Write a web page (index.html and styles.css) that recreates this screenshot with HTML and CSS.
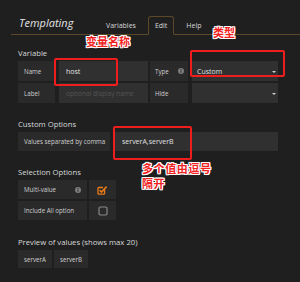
FILE: index.html
```html
<!DOCTYPE html>
<html lang="zh">
<head>
<meta charset="utf-8">
<title>Templating</title>
<link rel="stylesheet" href="styles.css">
</head>
<body>
<div class="page">
  <header class="head">
    <h2 class="title">Templating</h2>
    <nav class="tabs">
      <span class="tab">Variables</span>
      <span class="tab active">Edit</span>
      <span class="tab">Help</span>
    </nav>
  </header>

  <main class="content">
    <h5 class="sec sec-var">Variable</h5>
    <div class="row row-var">
      <span class="lbl w-name">Name</span>
      <span class="inp w-input">host</span>
      <span class="lbl w-type">Type
        <svg class="info" viewBox="0 0 6 6" width="6" height="6"><circle cx="3" cy="3" r="3" fill="#7d7d7d"/><rect x="2.55" y="2.5" width="0.9" height="2.3" fill="#2a2a2a"/><circle cx="3" cy="1.5" r="0.55" fill="#2a2a2a"/></svg>
      </span>
      <span class="inp w-select">Custom<i class="caret"></i></span>
    </div>
    <div class="row row-var">
      <span class="lbl w-name">Label</span>
      <span class="inp w-input placeholder">optional display name</span>
      <span class="lbl w-type">Hide</span>
      <span class="inp w-select"><i class="caret"></i></span>
    </div>

    <h5 class="sec">Custom Options</h5>
    <div class="row">
      <span class="lbl w-values">Values separated by comma</span>
      <span class="inp w-values-inp">serverA,serverB</span>
    </div>

    <h5 class="sec">Selection Options</h5>
    <div class="row row-tight">
      <span class="lbl w-sel">Multi-value
        <svg class="info" viewBox="0 0 6 6" width="6" height="6"><circle cx="3" cy="3" r="3" fill="#7d7d7d"/><rect x="2.55" y="2.5" width="0.9" height="2.3" fill="#2a2a2a"/><circle cx="3" cy="1.5" r="0.55" fill="#2a2a2a"/></svg>
      </span>
      <span class="box">
        <svg viewBox="0 0 11 10" width="11" height="10"><path d="M7.6 4.6 V8.2 A0.9 0.9 0 0 1 6.7 9.1 H1.9 A0.9 0.9 0 0 1 1 8.2 V3.4 A0.9 0.9 0 0 1 1.9 2.5 H6" fill="none" stroke="#eb7b18" stroke-width="1.3"/><path d="M2.7 5.2 L4.5 7 L9.6 1.6" fill="none" stroke="#eb7b18" stroke-width="1.6"/></svg>
      </span>
    </div>
    <div class="row row-tight">
      <span class="lbl w-sel">Include All option</span>
      <span class="box">
        <svg viewBox="0 0 10 10" width="10" height="10"><rect x="1" y="1" width="8" height="8" rx="1.4" fill="none" stroke="#8a8a8a" stroke-width="1.2"/></svg>
      </span>
    </div>

    <h5 class="sec sec-prev">Preview of values (shows max 20)</h5>
    <div class="row chips">
      <span class="chip">serverA</span>
      <span class="chip">serverB</span>
    </div>
  </main>

  <div class="mark mark-name"></div>
  <div class="mark mark-type"></div>
  <div class="mark mark-custom"></div>
  <p class="note note-name">变量名称</p>
  <p class="note note-type">类型</p>
  <p class="note note-custom">多个值由逗号<br>隔开</p>
</div>
</body>
</html>
```

FILE: styles.css
```css
* { box-sizing: border-box; }

html, body {
  margin: 0;
  padding: 0;
  background: #1f1f1f;
}

body {
  font-family: "Open Sans", "Liberation Sans", sans-serif;
  color: #d8d9da;
  width: 300px;
  height: 282px;
  overflow: hidden;
}

.page {
  position: relative;
  width: 300px;
  height: 282px;
}

/* header */
.head {
  display: flex;
  align-items: flex-end;
  height: 35px;
  margin-left: 11px;
  padding-left: 8px;
  border-bottom: 1px solid #5a4827;
}

.title {
  flex: none;
  width: 80px;
  margin: 0 0 4px 0;
  font-size: 11px;
  line-height: 14px;
  font-style: italic;
  font-weight: 400;
  color: #e4e4e4;
}

.tabs {
  display: flex;
  margin-bottom: -1px;
}

.tab {
  font-size: 7px;
  line-height: 13px;
  padding: 2px 6px;
  margin-right: 5px;
  border: 1px solid transparent;
  color: #d8d9da;
}

.tab.active {
  border-color: #5a4827;
  border-bottom-color: #1f1f1f;
  border-radius: 3px 3px 0 0;
  background: #1f1f1f;
}

/* content */
.content {
  padding-left: 18px;
}

.sec {
  margin: 16px 0 3px 0;
  font-size: 7.7px;
  line-height: 10px;
  font-weight: 400;
  color: #d8d9da;
}

.sec-var { margin-top: 13px; }
.sec-prev { margin-top: 17px; }

.row {
  display: flex;
  height: 19px;
  margin-bottom: 2px;
}

.row-var { height: 20px; }

.lbl, .inp, .chip, .box {
  display: flex;
  align-items: center;
  height: 100%;
  font-size: 6.2px;
  white-space: nowrap;
}

.lbl {
  background: #2a2a2a;
  padding-left: 6px;
  color: #d0d0d0;
  font-weight: 500;
}

.inp {
  background: #303030;
  padding-left: 7px;
  font-size: 7px;
  color: #e0e0e0;
}

.placeholder {
  color: #555;
  font-size: 6.6px;
}

.w-name { width: 37px; margin-right: 4px; }
.w-input { width: 89px; margin-right: 2px; }
.w-type { width: 38px; margin-right: 4px; padding-left: 5px; padding-right: 4px; }
.w-select { width: 86px; padding-left: 5px; padding-right: 2px; }
.w-values { width: 92px; margin-right: 4px; }
.w-values-inp { width: 164px; padding-left: 8px; }
.w-sel { width: 69px; margin-right: 2px; padding-right: 6px; }

.info {
  margin-left: auto;
  flex: none;
}

.caret {
  margin-left: auto;
  width: 0;
  height: 0;
  border-left: 2.5px solid transparent;
  border-right: 2.5px solid transparent;
  border-top: 2.5px solid #cfcfcf;
  margin-top: 1px;
}

.box {
  width: 27px;
  background: #2a2a2a;
  justify-content: center;
}

.chips { height: 18px; }

.chip {
  background: #2a2a2a;
  padding: 0 6px;
  margin-right: 2px;
  color: #d0d0d0;
  font-weight: 500;
}

/* annotations overlaid on the screenshot */
.mark {
  position: absolute;
  border: 2px solid #f01d1d;
  border-radius: 2px;
}

.mark-name { left: 54px; top: 58px; width: 64px; height: 28px; }
.mark-type { left: 190px; top: 50px; width: 95px; height: 27px; }
.mark-custom { left: 113px; top: 126px; width: 79px; height: 34px; }

.note {
  position: absolute;
  margin: 0;
  font-family: "Noto Sans CJK SC", sans-serif;
  font-weight: 700;
  font-size: 11px;
  line-height: 14px;
  color: #f2221f;
  white-space: nowrap;
  text-shadow:
    1px 0 0 #fff, -1px 0 0 #fff, 0 1px 0 #fff, 0 -1px 0 #fff,
    1px 1px 0 #fff, -1px -1px 0 #fff, 1px -1px 0 #fff, -1px 1px 0 #fff;
}

.note-name { left: 86px; top: 34px; }
.note-type { left: 213px; top: 25px; }
.note-custom { left: 142px; top: 161px; line-height: 15px; letter-spacing: 0.6px; }
```
